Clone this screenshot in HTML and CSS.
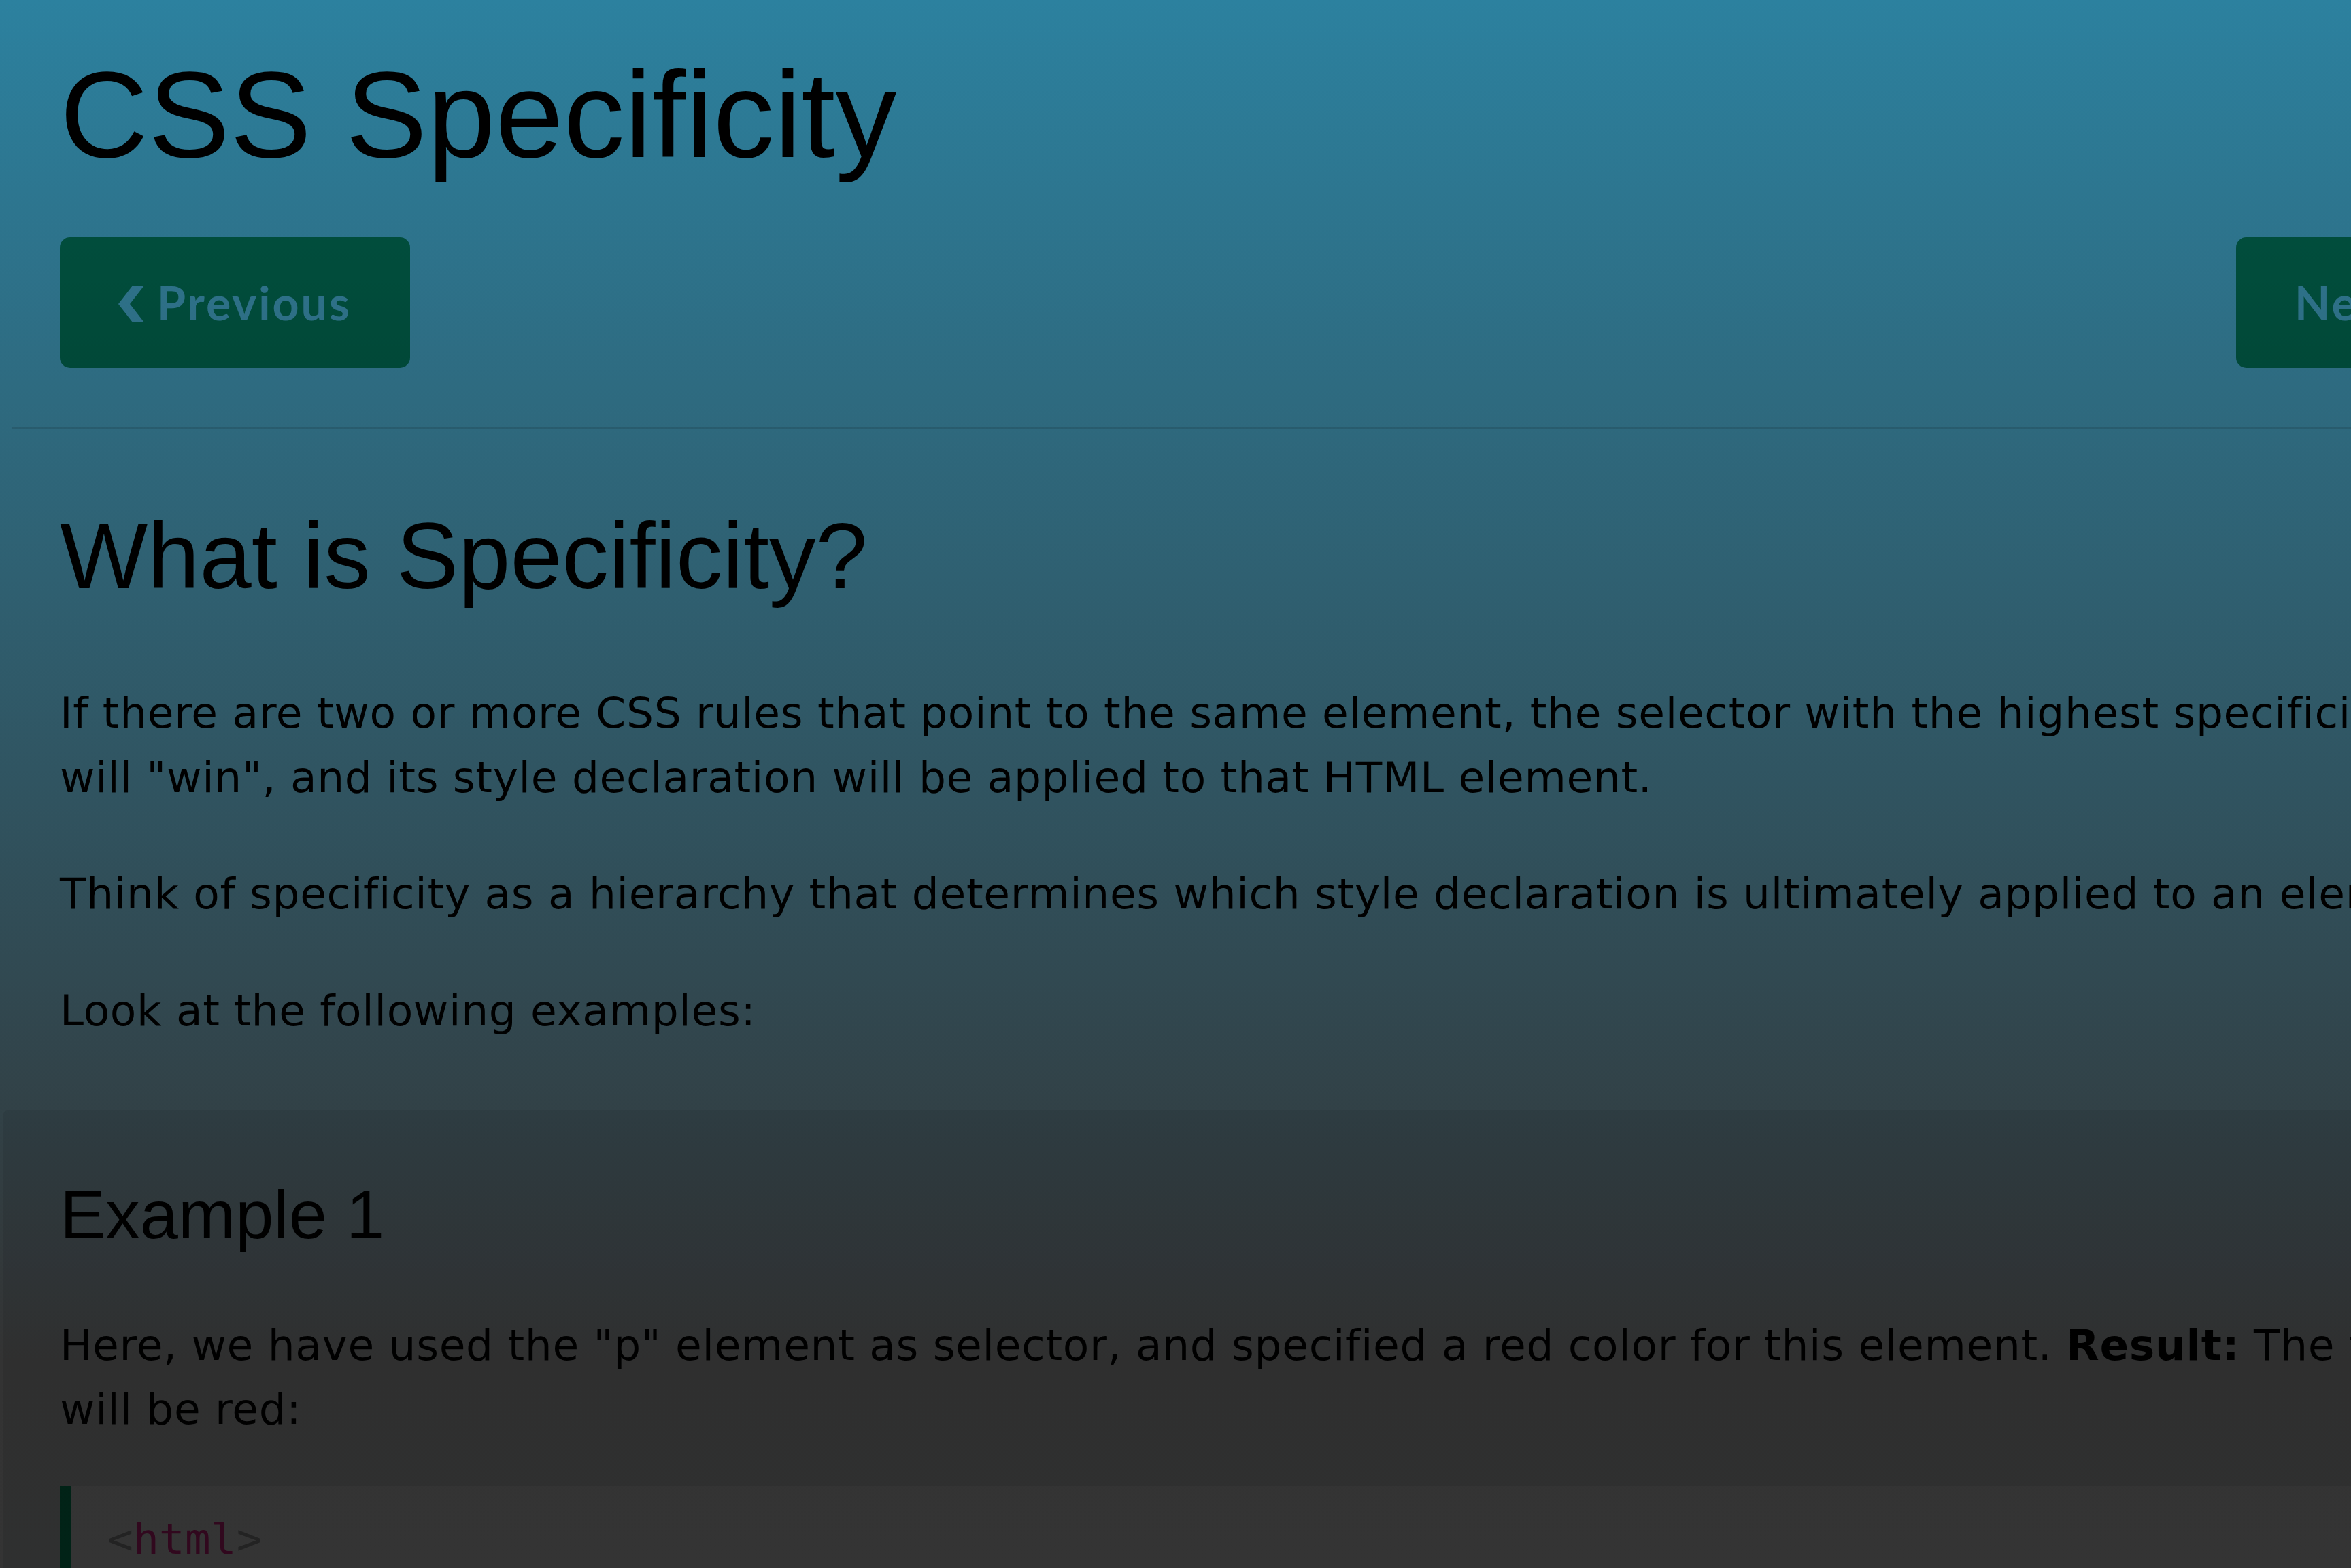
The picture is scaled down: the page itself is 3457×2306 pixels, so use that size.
FILE: index.html
```html
<!DOCTYPE html>
<html lang="en">
<head>
<meta charset="utf-8">
<title>CSS Specificity</title>
<link rel="stylesheet" href="styles.css">
</head>
<body>
<main class="main">
  <h1 class="title">CSS Specificity</h1>
  <nav class="nextprev">
    <a class="btn" href="#">
      <svg class="chev" viewBox="0 0 38 54" width="38" height="54"><polygon points="21,0 38,0 17,27 38,54 21,54 0,27"/></svg>
      <span>Previous</span>
    </a>
    <a class="btn" href="#">
      <span>Next</span>
      <svg class="chev" viewBox="0 0 38 54" width="38" height="54"><polygon points="17,0 0,0 21,27 0,54 17,54 38,27"/></svg>
    </a>
  </nav>
  <hr class="rule">
  <h2 class="section-title">What is Specificity?</h2>
  <p class="text">If there are two or more CSS rules that point to the same element, the selector with the highest specificity value will "win", and its style declaration will be applied to that HTML element.</p>
  <p class="text">Think of specificity as a hierarchy that determines which style declaration is ultimately applied to an element.</p>
  <p class="text">Look at the following examples:</p>

  <section class="example">
    <h2 class="example-title">Example 1</h2>
    <p class="example-text">Here, we have used the "p" element as selector, and specified a red color for this element. <b>Result:</b> The text will be red:</p>
    <div class="code">
      <div class="code-line"><span class="tag">&lt;</span><span class="tagname">html</span><span class="tag">&gt;</span></div>
      <div class="code-line"><span class="tag">&lt;</span><span class="tagname">head</span><span class="tag">&gt;</span></div>
      <div class="code-line"><span class="tag">&lt;</span><span class="tagname">style</span><span class="tag">&gt;</span></div>
      <div class="code-line">p {color: red;}</div>
    </div>
  </section>
</main>
<div class="overlay"></div>
</body>
</html>
```

FILE: styles.css
```css
html, body {
  margin: 0;
  padding: 0;
  overflow: hidden;
  background: #ffffff;
}

body {
  font-family: "DejaVu Sans", Verdana, sans-serif;
  font-size: 63px;
  line-height: 1.5;
  letter-spacing: 0.66px;
  color: #000;
  height: 2306px;
}

.main {
  width: 3660px;
  padding: 0 88px;
}

.title {
  font-family: "Liberation Sans", Arial, sans-serif;
  font-weight: normal;
  font-size: 180px;
  line-height: 216px;
  letter-spacing: 0;
  margin: 61px 0 0;
}

.nextprev {
  display: flex;
  justify-content: space-between;
  margin: 72px 71px 0 0;
}

.btn {
  display: flex;
  align-items: center;
  gap: 19px;
  height: 192px;
  padding: 0 86px;
  background: #04aa6d;
  color: #ffffff;
  border-radius: 15px;
  text-decoration: none;
  font-family: "Lato", "Open Sans", sans-serif;
  font-weight: bold;
  font-size: 68px;
  letter-spacing: 3px;
  box-sizing: border-box;
}

.chev {
  fill: #ffffff;
  display: block;
  margin-top: 4px;
}

.rule {
  border: 0;
  border-top: 3px solid #dedede;
  margin: 87px -70px 0;
}

.section-title {
  font-family: "Liberation Sans", Arial, sans-serif;
  font-weight: normal;
  font-size: 137px;
  line-height: 1.2;
  letter-spacing: 0;
  margin: 105px 0 102px;
}

.text {
  margin: 77px 0;
}

.section-title + .text {
  margin-top: 102px;
}

.example {
  background: #e7e9eb;
  margin: 99px -83px 0;
  padding: 93px 143px 60px 83px;
  border-radius: 6px;
}

.example-title {
  font-family: "Liberation Sans", Arial, sans-serif;
  font-weight: normal;
  font-size: 101px;
  line-height: 1.2;
  letter-spacing: 0;
  margin: 0 0 84px;
}

.example-text {
  margin: 0 0 65px;
}

.code {
  background: #ffffff;
  border-left: 17px solid #04aa6d;
  padding: 31px 40px 31px 53px;
  font-family: "DejaVu Sans Mono", "Liberation Mono", monospace;
  font-size: 63px;
  line-height: 1.5;
  letter-spacing: 0;
}

.tag {
  color: #a8a8a8;
}

.tagname {
  color: #f0268f;
}

.overlay {
  position: fixed;
  inset: 0;
  background: linear-gradient(to bottom, #2c819f 0px, #333333 2000px, #343434 2306px);
  mix-blend-mode: multiply;
  pointer-events: none;
}
```
